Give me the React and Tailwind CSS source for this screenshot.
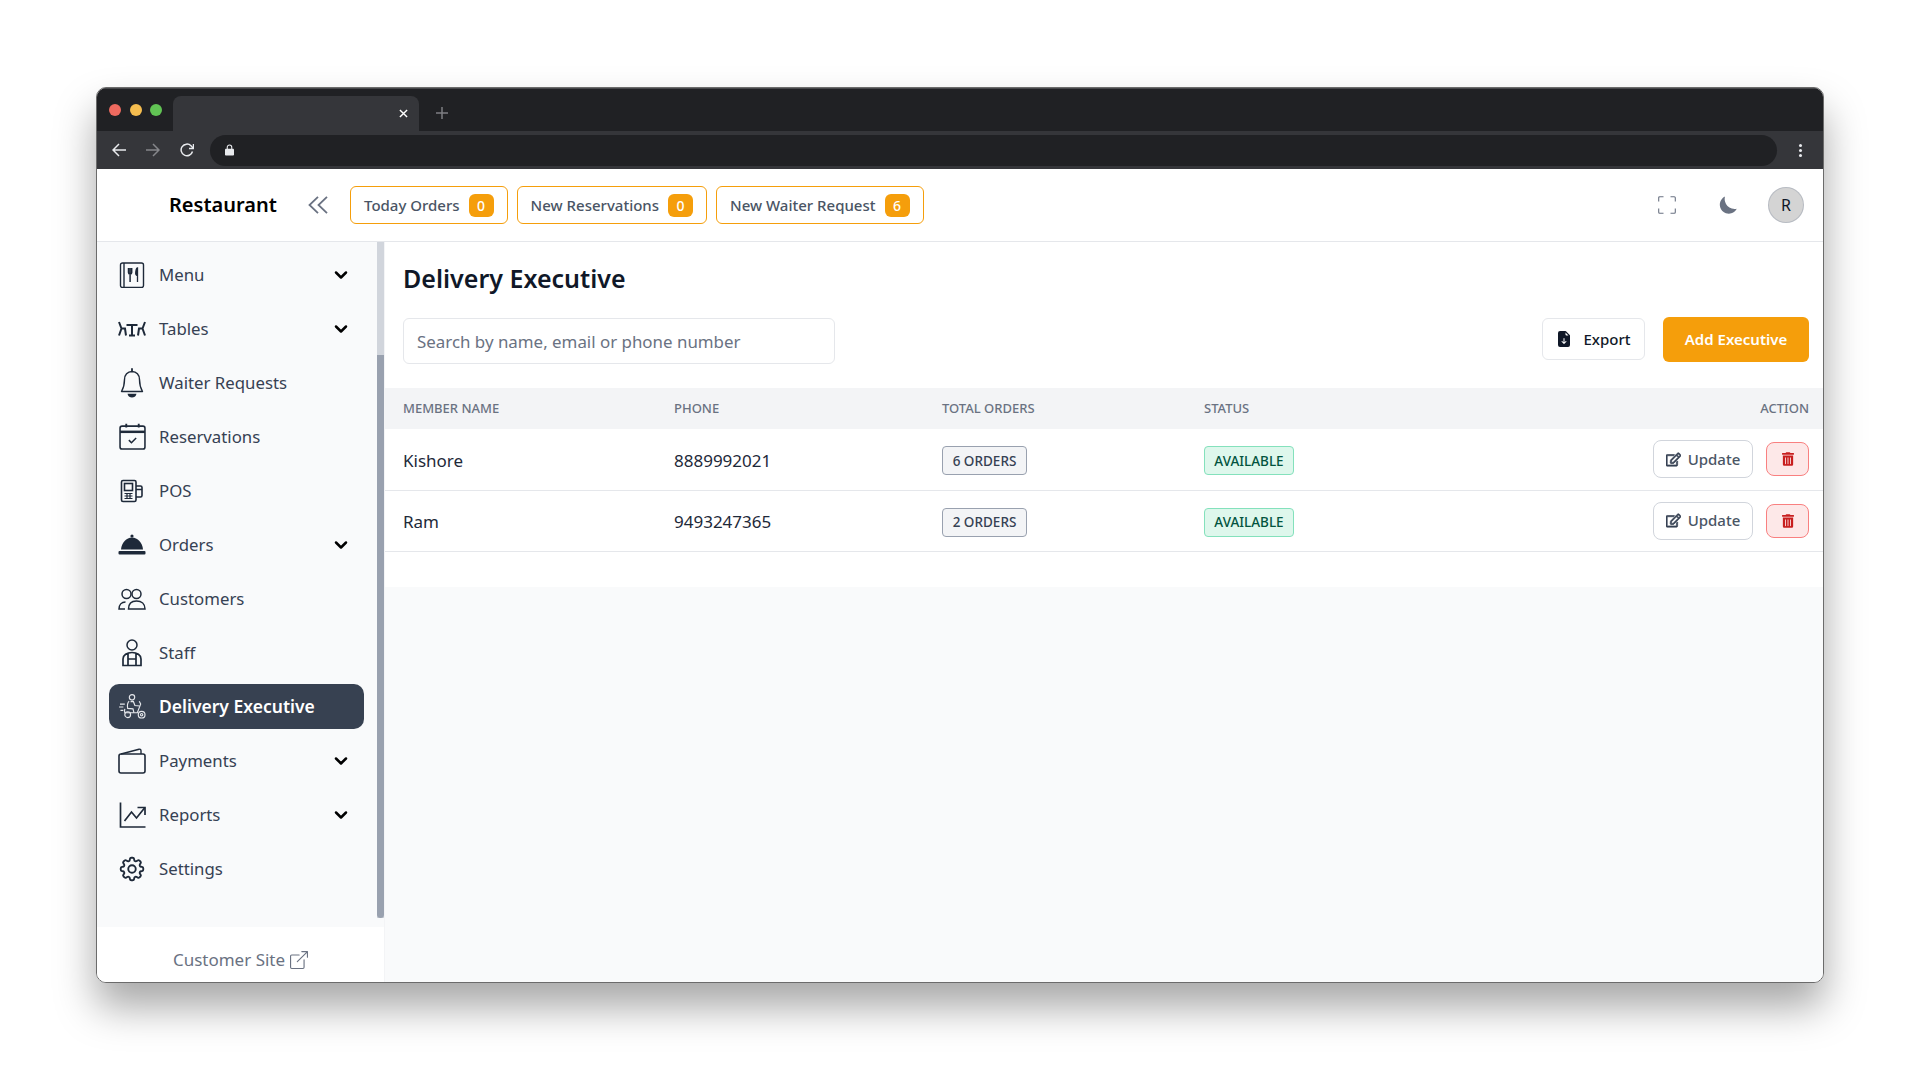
import React from 'react';
import { ChevronDown } from 'lucide-react';
import { BsFileEarmarkArrowDownFill, BsBoxArrowUpRight } from 'react-icons/bs';
import { FaRegEdit, FaTrashAlt } from 'react-icons/fa';
import { HiOutlineCog8Tooth } from 'react-icons/hi2';

const font = 'font-["Noto_Sans","Open_Sans",sans-serif]';

const MenuIcon = () => (
  <svg viewBox="0 0 26 26" className="w-[26px] h-[26px]" fill="none" stroke="currentColor" strokeWidth="1.4">
    <rect x="1.5" y="1" width="23" height="24.5" rx="2" />
    <path d="M5 1v24.5" />
    <path d="M9.5 6v4.5a1.6 1.6 0 0 0 3.2 0V6M11.1 6v14" strokeWidth="1.5" />
    <path d="M18.5 20v-6.5M18.5 13.5c-1.6 0-2-1.5-1.7-3.5.2-2 1-4 1.7-4z" fill="currentColor" strokeWidth="1.3" />
  </svg>
);
const TablesIcon = () => (
  <svg viewBox="0 0 28 18" className="w-[28px] h-[18px]" fill="none" stroke="currentColor" strokeWidth="2">
    <path d="M1 2l2.500 6.500H7l1 7M1 15.500l2.500-7M27 2l-2.500 6.500H21l-1 7M27 15.500l-2.500-7" />
    <path d="M8.500 5h11M14 5v10.500M11 15.500h6" />
  </svg>
);
const BellIcon = () => (
  <svg viewBox="0 0 24 30" className="w-[24px] h-[30px]" fill="none" stroke="currentColor" strokeWidth="1.400">
    <path d="M12 3.500c-4.500 0-7.500 3.500-7.500 8 0 5-1 8.500-3 12h21c-2-3.500-3-7-3-12 0-4.500-3-8-7.500-8z" strokeLinejoin="round" />
    <path d="M12 1v2.500" strokeLinecap="round" strokeWidth="1.800" />
    <path d="M8.500 26.500c.5 1.500 2 2.300 3.500 2.300s3-.8 3.500-2.300z" fill="currentColor" />
  </svg>
);
const CalendarIcon = () => (
  <svg viewBox="0 0 26 26" className="w-[27px] h-[27px]" fill="none" stroke="currentColor" strokeWidth="1.5">
    <rect x="1" y="3" width="24" height="22" rx="2" />
    <path d="M1 8.500h24" strokeWidth="2.400" />
    <path d="M7 .8v3.500M19 .8v3.500" strokeWidth="1.800" />
    <path d="M9.500 16.500l2.500 2.500 4.500-4.500" />
  </svg>
);
const PosIcon = () => (
  <svg viewBox="0 0 24 24" className="w-[24px] h-[24px]" fill="none" stroke="currentColor" strokeWidth="1.600">
    <rect x="1.500" y="1.500" width="14.500" height="21" rx="1.500" />
    <rect x="4.500" y="4.500" width="8" height="7" />
    <path d="M16 7h4.500a1.500 1.500 0 0 1 1.500 1.500v8a1.500 1.500 0 0 1-1.500 1.500H16M16 10.500h6" />
    <path d="M4.500 14.500h8M4.500 17h8M4.500 19.500h8M7 14v6M10 14v6" strokeWidth="1.200" />
  </svg>
);
const OrdersIcon = () => (
  <svg viewBox="0 0 28 22" className="w-[28px] h-[22px]" fill="currentColor">
    <circle cx="14" cy="2" r="1.600" />
    <path d="M3 15.500C3.500 8.500 8.500 3.500 14 3.500S24.500 8.500 25 15.500z" />
    <rect x="0.500" y="17" width="27" height="3.500" rx="1" />
  </svg>
);
const CustomersIcon = () => (
  <svg viewBox="0 0 28 22" className="w-[28px] h-[22px]" fill="none" stroke="currentColor" strokeWidth="1.500">
    <circle cx="8.500" cy="6" r="4.500" />
    <circle cx="18.500" cy="6" r="4.500" />
    <path d="M10.500 21h16.500c0-5-3.500-8-8.500-8s-8 3-8 8zM7 21H1c0-4 2.500-7 6.500-7" />
  </svg>
);
const StaffIcon = () => (
  <svg viewBox="0 0 20 28" className="w-[20px] h-[28px]" fill="none" stroke="currentColor" strokeWidth="1.500">
    <circle cx="10" cy="6" r="5" />
    <path d="M1 26.500V20c0-4 4-6.500 9-6.500s9 2.500 9 6.500v6.500zM6 14.500V26.500M14 14.500V26.500M6.500 20h7" strokeWidth="1.700" />
  </svg>
);
const DeliveryIcon = () => (
  <svg viewBox="0 0 28 26" className="w-[27px] h-[25px]" fill="none" stroke="currentColor" strokeWidth="1.200">
    <circle cx="13.500" cy="3.500" r="2.800" />
    <path d="M10.500 7.500c-1.500 1.500-2 5-1.500 7.500l5.500.5 1 4M12 8h3l1.500 4 5 .5" />
    <path d="M6 15.500c-.5 2-.5 3 0 4h13l3.500-9-1.500-3" />
    <path d="M1 10.500h5M0 13.500h4.500M1.500 17h3" />
    <circle cx="9" cy="21.500" r="3" />
    <circle cx="23.500" cy="21.500" r="3.500" />
    <circle cx="23.500" cy="21.500" r="1.200" />
  </svg>
);
const WalletIcon = () => (
  <svg viewBox="0 0 28 26" className="w-[28px] h-[26px]" fill="none" stroke="currentColor" strokeWidth="1.600">
    <rect x="1" y="6" width="26" height="19" rx="2" />
    <path d="M3 6L21 1.200c.8-.2 2 .2 2 1.500V6" strokeWidth="1.400" />
  </svg>
);
const ReportsIcon = () => (
  <svg viewBox="0 0 26 26" className="w-[27px] h-[26px]" fill="none" stroke="currentColor" strokeWidth="1.700">
    <path d="M1 .5V25h25" />
    <path d="M5 19l7-9 5 6 8-10" />
    <path d="M18 5.500h7.500V13" />
  </svg>
);
const ExpandIcon = () => (
  <svg viewBox="0 0 18 18" className="w-[18px] h-[18px] text-gray-500" fill="none" stroke="currentColor" strokeWidth="1.100">
    <path d="M.7 5.500V1.700a1 1 0 0 1 1-1h3.800M12.500.7h3.800a1 1 0 0 1 1 1v3.800M17.300 12.500v3.800a1 1 0 0 1-1 1h-3.800M5.500 17.300H1.700a1 1 0 0 1-1-1v-3.800" />
  </svg>
);
const MoonIcon = () => (
  <svg viewBox="0 0 18 18" className="w-[18px] h-[18px] ml-[43px] text-gray-500" fill="currentColor">
    <path d="M6 .5A9 9 0 1 0 17.800 12.800 10 10 0 0 1 6 .5z" />
  </svg>
);

const menu = [
  { label: 'Menu', icon: <MenuIcon />, caret: true },
  { label: 'Tables', icon: <TablesIcon />, caret: true },
  { label: 'Waiter Requests', icon: <BellIcon /> },
  { label: 'Reservations', icon: <CalendarIcon /> },
  { label: 'POS', icon: <PosIcon /> },
  { label: 'Orders', icon: <OrdersIcon />, caret: true },
  { label: 'Customers', icon: <CustomersIcon /> },
  { label: 'Staff', icon: <StaffIcon /> },
  { label: 'Delivery Executive', icon: <DeliveryIcon />, active: true },
  { label: 'Payments', icon: <WalletIcon />, caret: true },
  { label: 'Reports', icon: <ReportsIcon />, caret: true },
  { label: 'Settings', icon: <HiOutlineCog8Tooth className="w-[30px] h-[30px]" /> }
];

const stats = [
  { label: 'Today Orders', count: 0 },
  { label: 'New Reservations', count: 0 },
  { label: 'New Waiter Request', count: 6 }
];

const executives = [
  { name: 'Kishore', phone: '8889992021', orders: '6 ORDERS' },
  { name: 'Ram', phone: '9493247365', orders: '2 ORDERS' }
];

const BrowserBar = () => (
  <div className="shrink-0 bg-[#202124] text-white">
    <div className="h-[43px] flex items-end pl-[10px] border-t border-[#46474a]">
      <div className="flex gap-[8.500px] w-[66px] self-center -mt-[1px] pl-[2px]">
        <span className="w-[12px] h-[12px] rounded-full bg-[#ee6a5f]" />
        <span className="w-[12px] h-[12px] rounded-full bg-[#f5bd4f]" />
        <span className="w-[12px] h-[12px] rounded-full bg-[#61c454]" />
      </div>
      <div className="w-[246px] h-[35px] bg-[#35363a] rounded-t-[8px] flex items-center justify-end pr-[11px]">
        <svg viewBox="0 0 10 10" className="w-[9px] h-[9px]" stroke="white" strokeWidth="1.600"><path d="M1 1l8 8M9 1l-8 8" /></svg>
      </div>
      <svg viewBox="0 0 12 12" className="w-[12px] h-[12px] ml-[17px] mb-[12px]" stroke="#7d7e82" strokeWidth="1.500"><path d="M6 0v12M0 6h12" /></svg>
    </div>
    <div className="h-[38px] bg-[#35363a] flex items-center">
      <div className="w-[113px] flex items-center gap-[20px] pl-[15px] shrink-0">
        <svg viewBox="0 0 14 14" className="w-[14px] h-[14px]" fill="none" stroke="#e8eaed" strokeWidth="1.500"><path d="M14 7H1.500M7 1L1 7l6 6" /></svg>
        <svg viewBox="0 0 14 14" className="w-[14px] h-[14px]" fill="none" stroke="#85868a" strokeWidth="1.500"><path d="M0 7h12.500M7 1l6 6-6 6" /></svg>
        <svg viewBox="0 0 14 14" className="w-[14px] h-[14px]" fill="none" stroke="#e8eaed" strokeWidth="1.500"><path d="M12.500 8.500A5.800 5.800 0 1 1 11 2.800L13 5" /><path d="M13.500 1v4.500H9" /></svg>
      </div>
      <div className="flex-1 h-[31px] bg-[#202124] rounded-full flex items-center pl-[15px]">
        <svg viewBox="0 0 10 12" className="w-[9px] h-[12px]" fill="#e8eaed"><rect y="4.500" width="10" height="7.500" rx="1" /><path d="M2.500 5V3a2.500 2.500 0 0 1 5 0v2" fill="none" stroke="#e8eaed" strokeWidth="1.200" /></svg>
      </div>
      <div className="w-[46px] flex flex-col items-center gap-[2px]">
        <span className="w-[3px] h-[3px] rounded-full bg-[#e8eaed]" />
        <span className="w-[3px] h-[3px] rounded-full bg-[#e8eaed]" />
        <span className="w-[3px] h-[3px] rounded-full bg-[#e8eaed]" />
      </div>
    </div>
  </div>
);

const Header = () => (
  <header className="h-[73px] shrink-0 bg-white border-b border-gray-200 flex items-center">
    <span className="ml-[72px] w-[139px] text-[20px] font-semibold text-black">Restaurant</span>
    <svg viewBox="0 0 20 18" className="w-[20px] h-[18px] text-gray-500" fill="none" stroke="currentColor" strokeWidth="1.800"><path d="M10 .8L1.500 9l8.500 8.200M19 .8L10.500 9l8.500 8.200" /></svg>
    <div className="ml-[22px] flex gap-[9px]">
      {stats.map((stat) => (
        <div key={stat.label} className="h-[38px] flex items-center gap-[9px] px-[13px] rounded-md border border-[#f59e0b] text-[15px] font-medium text-gray-600">
          <span className="pt-[1px]">{stat.label}</span>
          <span className="w-[25px] h-[23px] rounded-md bg-[#f59e0b] text-white text-[14px] font-medium flex items-center justify-center">{stat.count}</span>
        </div>
      ))}
    </div>
    <div className="ml-auto flex items-center pr-[19px]">
      <ExpandIcon />
      <MoonIcon />
      <span className="w-[36px] h-[36px] ml-[31px] rounded-full bg-[#d4d4d4] border border-gray-400/50 flex items-center justify-center text-[16px] text-gray-900">R</span>
    </div>
  </header>
);

const Sidebar = () => (
  <aside className="w-[288px] shrink-0 flex flex-col border-r border-gray-100">
    <div className="relative flex-1 bg-gray-50 pt-[10px] pl-[12px] pr-[20px]">
      <nav className="flex flex-col gap-[9px]">
        {menu.map((item) => (
          <a
            key={item.label}
            className={`h-[45px] w-[255px] flex items-center rounded-[10px] pl-[8px] ${item.active ? 'bg-[#374151] text-white font-semibold text-[17.500px]' : 'text-gray-700 text-[16.800px]'}`}
          >
            <span className={`w-[30px] flex justify-center shrink-0 ${item.active ? 'text-gray-200' : 'text-gray-800'}`}>{item.icon}</span>
            <span className="ml-[12px]">{item.label}</span>
            {item.caret && <ChevronDown className="ml-auto mr-[13px] text-black" size={20} strokeWidth={3} />}
          </a>
        ))}
      </nav>
      <div className="absolute right-0 top-0 bottom-[9px] w-[7px] bg-gray-300">
        <div className="absolute left-0 right-0 top-[113px] bottom-0 rounded-b-full bg-gray-400" />
      </div>
    </div>
    <a className="h-[55px] shrink-0 bg-white flex items-center justify-center gap-[5px] text-[17px] text-gray-500 pt-[11px]">
      Customer Site <BsBoxArrowUpRight className="w-[18px] h-[18px]" />
    </a>
  </aside>
);

const Content = () => (
  <main className="flex-1 flex flex-col min-w-0 bg-gray-50">
    <div className="bg-white">
      <div className="pl-[18px] pr-[14px]">
        <h1 className="pt-[18px] text-[25px] leading-[36px] font-semibold text-gray-900">Delivery Executive</h1>
        <div className="mt-[22px] flex justify-between items-start">
          <div className="w-[432px] h-[46px] rounded-md border border-gray-200 flex items-center pl-[13px] pt-[1px] text-[16.900px] text-gray-500 bg-white">
            Search by name, email or phone number
          </div>
          <div className="flex items-start gap-[18px]">
            <button className="w-[103px] h-[42px] rounded-md border border-gray-200 bg-white flex items-center justify-center gap-[11px] text-[15px] font-medium text-gray-900">
              <BsFileEarmarkArrowDownFill className="w-[16px] h-[18px] text-gray-900" />Export
            </button>
            <button className="w-[146px] h-[45px] rounded-md bg-[#f59e0b] text-white text-[15px] font-semibold -mt-[1px]">Add Executive</button>
          </div>
        </div>
      </div>
      <table className="mt-[24px] w-full table-fixed text-left">
        <colgroup>
          <col className="w-[289px]" />
          <col className="w-[268px]" />
          <col className="w-[262px]" />
          <col className="w-[300px]" />
          <col />
        </colgroup>
        <thead className="bg-gray-100 text-[13px] font-medium text-gray-500">
          <tr className="h-[41px]">
            <th className="pl-[18px] font-medium">MEMBER NAME</th>
            <th className="font-medium">PHONE</th>
            <th className="font-medium">TOTAL ORDERS</th>
            <th className="font-medium">STATUS</th>
            <th className="pr-[14px] text-right font-medium">ACTION</th>
          </tr>
        </thead>
        <tbody className="text-[17px] text-gray-800">
          {executives.map((row) => (
            <tr key={row.name} className="h-[61px] border-b border-gray-200">
              <td className="pl-[18px] pt-[3px]">{row.name}</td>
              <td className="pt-[3px]">{row.phone}</td>
              <td className="pt-[3px]">
                <span className="inline-flex items-center justify-center w-[85px] h-[29px] rounded-[4px] border border-gray-400 bg-gray-100 text-[13.500px] font-medium text-gray-700">{row.orders}</span>
              </td>
              <td className="pt-[3px]">
                <span className="inline-flex items-center justify-center w-[90px] h-[29px] rounded-[4px] border border-[#84e1bc] bg-[#def7ec] text-[13.500px] font-medium text-[#03543f]">AVAILABLE</span>
              </td>
              <td className="pr-[14px]">
                <div className="flex justify-end items-center gap-[13px]">
                  <button className="w-[100px] h-[38px] rounded-lg border border-gray-300 bg-white flex items-center justify-center gap-[7px] text-[15px] font-medium text-gray-600">
                    <FaRegEdit className="w-[15px] h-[15px] text-gray-700" stroke="currentColor" strokeWidth="24" />Update
                  </button>
                  <button className="w-[43px] h-[34px] rounded-lg border border-[#f98080] bg-[#fde8e8] flex items-center justify-center">
                    <FaTrashAlt className="w-[12px] h-[14px] text-[#c81e1e]" />
                  </button>
                </div>
              </td>
            </tr>
          ))}
        </tbody>
      </table>
      <div className="h-[35px]" />
    </div>
  </main>
);

export default function App() {
  return (
    <div className={`min-h-screen bg-white pt-[87px] pl-[96px] ${font}`}>
      <div className="w-[1728px] h-[896px] flex flex-col overflow-hidden rounded-[10px] border border-[#6b6b6b] shadow-[0_24px_40px_rgba(0,0,0,0.35)]">
        <BrowserBar />
        <Header />
        <div className="flex-1 flex min-h-0">
          <Sidebar />
          <Content />
        </div>
      </div>
    </div>
  );
}
